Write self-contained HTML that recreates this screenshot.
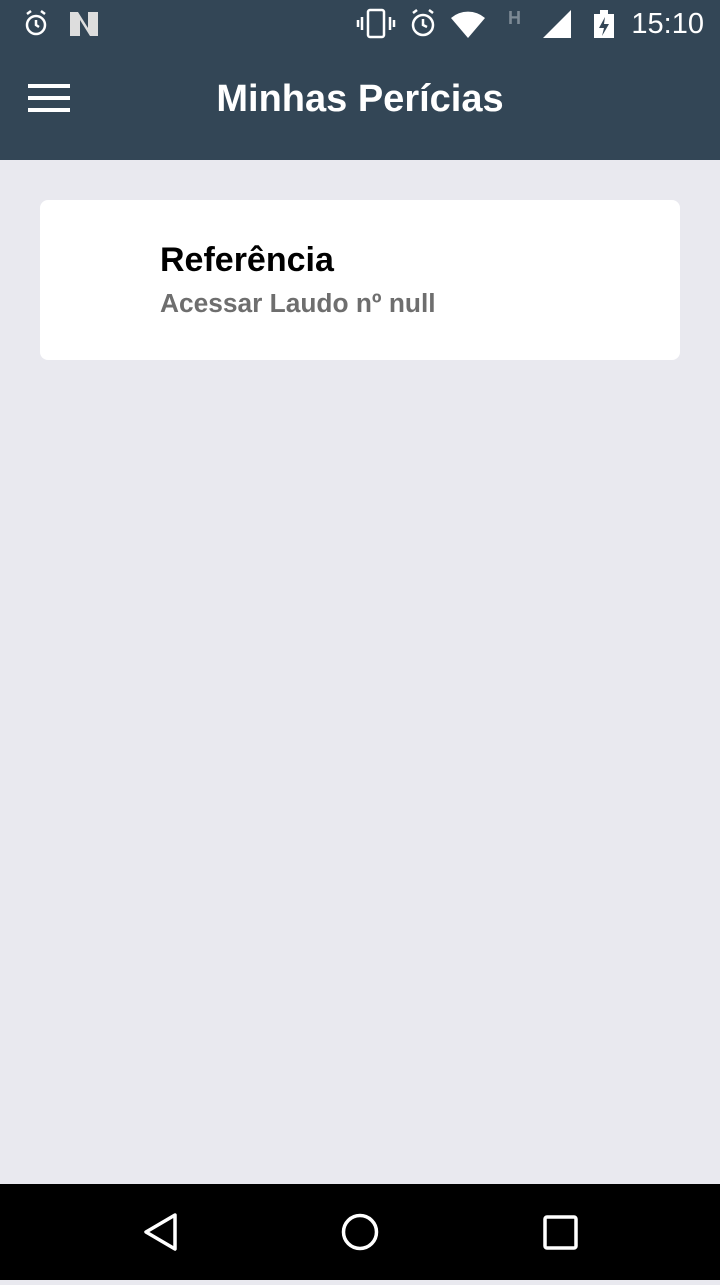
<!DOCTYPE html>
<html><head><meta charset="utf-8"><style>
*{margin:0;padding:0;box-sizing:border-box}
body{width:720px;height:1280px;background:#e9e9ef;font-family:"Liberation Sans",sans-serif;position:relative;overflow:hidden}
.top{position:absolute;left:0;top:0;width:720px;height:160px;background:#334656}
.time{position:absolute;right:16px;top:8px;color:#fff;font-size:29px}
.title{position:absolute;left:0;width:720px;top:78px;text-align:center;color:#fff;font-size:38px;font-weight:bold}
.ham{position:absolute;left:28px;width:42px;height:4px;background:#fff}
.card{position:absolute;left:40px;top:200px;width:640px;height:160px;background:#fff;border-radius:8px}
.t1{position:absolute;left:120px;top:41px;font-size:34px;font-weight:bold;color:#000}
.t2{position:absolute;left:120px;top:88px;font-size:26.3px;font-weight:bold;color:#6e6e6e}
.nav{position:absolute;left:0;top:1184px;width:720px;height:96px;background:#000}
</style></head><body>
<div class="top">
<svg style="position:absolute;left:0;top:0" width="620" height="50">
<g fill="none" stroke="#fff" stroke-width="2.5">
<circle cx="36" cy="25" r="9"/><path d="M27 14l4-3M45 14l-4-3M36 20v5l3 2"/>
<rect x="368" y="10" width="16" height="27" rx="2"/><path d="M362 17v13M390 17v13M358 20v7M394 20v7"/>
<circle cx="423" cy="25" r="10"/><path d="M413 13l4-3M433 13l-4-3M423 19v6l4 2"/>
</g>
<path d="M70 12h8l10 16V12h10v24h-8L80 20v16H70z" fill="#ddd"/>
<path d="M451 18a26 26 0 0 1 34 0L468 38z" fill="#fff"/>
<text x="508" y="24" fill="#7d8a95" font-size="18" font-weight="bold" font-family="Liberation Sans">H</text>
<path d="M543 38L571 10V38z" fill="#fff"/>
<rect x="594" y="14" width="20" height="24" fill="#fff"/><rect x="600" y="10" width="8" height="4" fill="#fff"/>
<path d="M605 17l-6 11h5l-2 8 7-12h-5z" fill="#334656"/>
</svg>
<div class="time">15:10</div>
<div class="ham" style="top:84px"></div><div class="ham" style="top:96px"></div><div class="ham" style="top:108px"></div>
<div class="title">Minhas Perícias</div>
</div>
<div class="card"><div class="t1">Referência</div><div class="t2">Acessar Laudo nº null</div></div>
<div class="nav"><svg width="720" height="96" fill="none" stroke="#fff" stroke-width="3.5">
<path d="M175 31L146 48L175 65z" stroke-linejoin="round"/>
<circle cx="360" cy="48" r="16.5"/>
<rect x="545" y="33" width="31" height="31" rx="2"/>
</svg></div>
</body></html>
